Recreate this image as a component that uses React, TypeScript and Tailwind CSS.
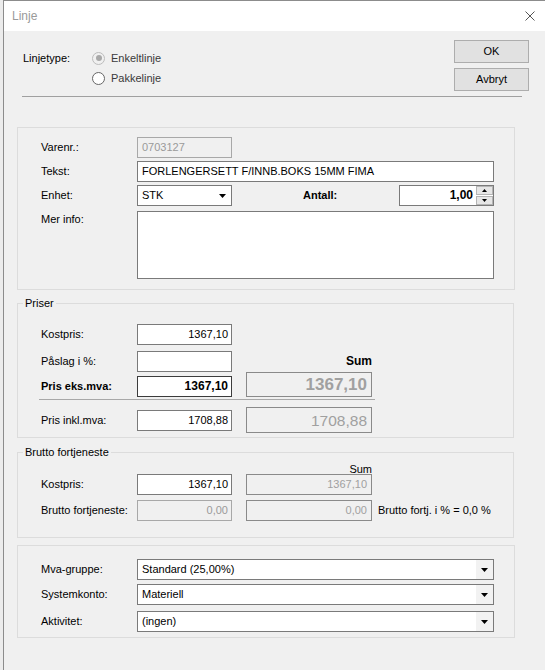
import React from "react";

// Win10 / WinForms "Linje" dialog

const LABEL_W = "w-[96px]";

function Label({ children, bold }: { children: React.ReactNode; bold?: boolean }) {
  return (
    <div className={`${LABEL_W} shrink-0 text-black ${bold ? "font-bold" : ""}`}>
      {children}
    </div>
  );
}

function TextBox({
  value = "",
  w,
  right,
  disabled,
  bold,
  focused,
}: {
  value?: string;
  w: string;
  right?: boolean;
  disabled?: boolean;
  bold?: boolean;
  focused?: boolean;
}) {
  return (
    <div
      className={`${w} h-[21px] shrink-0 flex items-center border px-[4px] ${
        right ? "justify-end pr-[3px]" : ""
      } ${disabled ? "bg-[#f0f0f0] border-[#a8a8a8] text-[#9a9a9a]" : "bg-white text-black"} ${
        focused ? "border-[#3c3c3c]" : disabled ? "" : "border-[#7a7a7a]"
      } ${bold ? "font-bold text-[12px]" : ""}`}
    >
      {value}
    </div>
  );
}

function Arrow() {
  return (
    <svg width="7" height="4" viewBox="0 0 7 4">
      <path d="M0 0H7L3.5 4Z" fill="#000" />
    </svg>
  );
}

function Combo({ value, w, grayArrow }: { value: string; w: string; grayArrow?: boolean }) {
  return (
    <div className={`${w} h-[21px] shrink-0 flex border border-[#7a7a7a] bg-white`}>
      <div className="flex-1 flex items-center pl-[4px] text-black">{value}</div>
      <div
        className={`w-[17px] flex items-center justify-center ${grayArrow ? "bg-[#f2f2f2]" : ""}`}
      >
        <Arrow />
      </div>
    </div>
  );
}

function SumBox({ value, size, h }: { value: string; size: string; h: string }) {
  return (
    <div
      className={`w-[126px] ${h} shrink-0 flex items-center justify-end pr-[4px] border border-[#8a8a8a] bg-[#f0f0f0] text-[#a0a0a0] ${size}`}
    >
      {value}
    </div>
  );
}

function Radio({ label, checked }: { label: string; checked?: boolean }) {
  return (
    <div className="h-[20px] flex items-center">
      <div
        className={`w-[13px] h-[13px] rounded-full border flex items-center justify-center ${
          checked ? "border-[#bcbcbc] bg-[#f0f0f0]" : "border-[#666] bg-white"
        }`}
      >
        {checked && <div className="w-[6px] h-[6px] rounded-full bg-[#a8a8a8]" />}
      </div>
      <span className="ml-[6px] text-[#3a3a3a]">{label}</span>
    </div>
  );
}

function Spinner() {
  return (
    <div className="w-[17px] flex flex-col justify-between">
      {["M0 3H5L2.5 0Z", "M0 0H5L2.5 3Z"].map((d) => (
        <div
          key={d}
          className="h-[9px] bg-[#e6e6e6] border border-[#b4b4b4] flex items-center justify-center"
        >
          <svg width="5" height="3" viewBox="0 0 5 3">
            <path d={d} fill="#000" />
          </svg>
        </div>
      ))}
    </div>
  );
}

export default function App() {
  return (
    <div className="w-[545px] h-[670px] flex overflow-hidden text-[11px] leading-[13px] font-['Liberation_Sans',Arial,sans-serif]">
      <div className="w-[3px] shrink-0 bg-[#ececec]" />
      <div className="flex-1 flex flex-col border-l border-t border-[#8c8c8c] bg-[#f0f0f0]">
        {/* title bar */}
        <div className="h-[30px] shrink-0 bg-white flex items-center justify-between pl-[8px] pr-[10px]">
          <span className="text-[12px] text-[#9a9a9a]">Linje</span>
          <svg width="10" height="10" viewBox="0 0 10 10">
            <path d="M0.5 0.5L9.5 9.5M9.5 0.5L0.5 9.5" stroke="#555" strokeWidth="1" />
          </svg>
        </div>

        {/* linjetype + buttons */}
        <div className="flex">
          <div className="flex-1 flex pl-[19px] pt-[17px]">
            <div className="w-[69px] h-[20px] flex items-center text-black">Linjetype:</div>
            <div className="flex flex-col">
              <Radio label="Enkeltlinje" checked />
              <Radio label="Pakkelinje" />
            </div>
          </div>
          <div className="w-[75px] mr-[16px] pt-[9px] flex flex-col gap-[5px]">
            {["OK", "Avbryt"].map((b) => (
              <button
                key={b}
                className="h-[23px] bg-[#e1e1e1] border border-[#adadad] text-black text-[11px]"
              >
                {b}
              </button>
            ))}
          </div>
        </div>
        <div className="mt-[5px] ml-[18px] w-[500px] h-[1px] bg-[#a0a0a0]" />

        {/* article */}
        <div className="mt-[30px] ml-[13px] w-[498px] border border-[#dcdcdc] pt-[9px] pb-[10px] pl-[23px]">
          <div className="flex items-center h-[21px]">
            <Label>Varenr.:</Label>
            <TextBox w="w-[95px]" value="0703127" disabled />
          </div>
          <div className="flex items-center h-[21px] mt-[3px]">
            <Label>Tekst:</Label>
            <TextBox w="w-[357px]" value="FORLENGERSETT F/INNB.BOKS 15MM FIMA" />
          </div>
          <div className="flex items-center h-[21px] mt-[3px]">
            <Label>Enhet:</Label>
            <Combo w="w-[95px]" value="STK" />
            <div className="w-[167px] pl-[71px] font-bold text-black">Antall:</div>
            <div className="w-[95px] h-[21px] flex border border-[#7a7a7a] bg-white">
              <div className="flex-1 flex items-center justify-end pr-[3px] font-bold text-[12px] text-black">
                1,00
              </div>
              <Spinner />
            </div>
          </div>
          <div className="flex mt-[5px]">
            <div className={`${LABEL_W} shrink-0 pt-[2px] text-black`}>Mer info:</div>
            <div className="w-[357px] h-[68px] border border-[#7a7a7a] bg-white" />
          </div>
        </div>

        {/* Priser */}
        <fieldset className="mt-[7px] ml-[13px] w-[497px] border border-[#dcdcdc] p-0">
          <legend className="ml-[5px] px-[2px] leading-[13px] text-black">Priser</legend>
          <div className="pt-[14px] pb-[4px] pl-[23px]">
            <div className="flex items-center h-[21px]">
              <Label>Kostpris:</Label>
              <TextBox w="w-[95px]" value="1367,10" right />
            </div>
            <div className="flex items-center h-[21px] mt-[6px]">
              <Label>Påslag i %:</Label>
              <TextBox w="w-[95px]" />
              <div className="ml-[14px] w-[126px] text-right font-bold text-[12px] text-black">
                Sum
              </div>
            </div>
            <div className="flex items-end h-[25px]">
              <Label bold>
                <div className="h-[21px] flex items-center">Pris eks.mva:</div>
              </Label>
              <TextBox w="w-[95px]" value="1367,10" right bold focused />
              <div className="ml-[14px]">
                <SumBox value="1367,10" size="text-[17px] font-bold" h="h-[25px]" />
              </div>
            </div>
            <div className="mt-[2px] ml-[-2px] w-[336px] h-[1px] bg-[#a8a8a8]" />
            <div className="flex items-center h-[26px] mt-[7px]">
              <Label>Pris inkl.mva:</Label>
              <TextBox w="w-[95px]" value="1708,88" right />
              <div className="ml-[14px]">
                <SumBox value="1708,88" size="text-[15.5px]" h="h-[26px]" />
              </div>
            </div>
          </div>
        </fieldset>

        {/* Brutto fortjeneste */}
        <fieldset className="mt-[8px] ml-[13px] w-[497px] border border-[#dcdcdc] p-0">
          <legend className="ml-[5px] px-[2px] leading-[13px] text-black">Brutto fortjeneste</legend>
          <div className="pt-[4px] pb-[16px] pl-[23px]">
            <div className="flex h-[13px]">
              <div className={`${LABEL_W} shrink-0`} />
              <div className="w-[95px]" />
              <div className="ml-[14px] w-[126px] text-right text-black">Sum</div>
            </div>
            <div className="flex items-center h-[21px] mt-[-2px]">
              <Label>Kostpris:</Label>
              <TextBox w="w-[95px]" value="1367,10" right />
              <div className="ml-[14px]">
                <SumBox value="1367,10" size="" h="h-[21px]" />
              </div>
            </div>
            <div className="flex items-center h-[21px] mt-[5px]">
              <Label>Brutto fortjeneste:</Label>
              <TextBox w="w-[95px]" value="0,00" right disabled />
              <div className="ml-[14px]">
                <SumBox value="0,00" size="" h="h-[21px]" />
              </div>
              <span className="ml-[6px] text-black">Brutto fortj. i % = 0,0 %</span>
            </div>
          </div>
        </fieldset>

        {/* mva / konto */}
        <div className="mt-[7px] ml-[13px] w-[498px] border border-[#dcdcdc] pt-[13px] pb-[5px] pl-[23px]">
          <div className="flex items-center h-[21px]">
            <Label>Mva-gruppe:</Label>
            <Combo w="w-[357px]" value="Standard (25,00%)" grayArrow />
          </div>
          <div className="flex items-center h-[21px] mt-[4px]">
            <Label>Systemkonto:</Label>
            <Combo w="w-[357px]" value="Materiell" grayArrow />
          </div>
          <div className="flex items-center h-[21px] mt-[6px]">
            <Label>Aktivitet:</Label>
            <Combo w="w-[357px]" value="(ingen)" grayArrow />
          </div>
        </div>
      </div>
    </div>
  );
}
